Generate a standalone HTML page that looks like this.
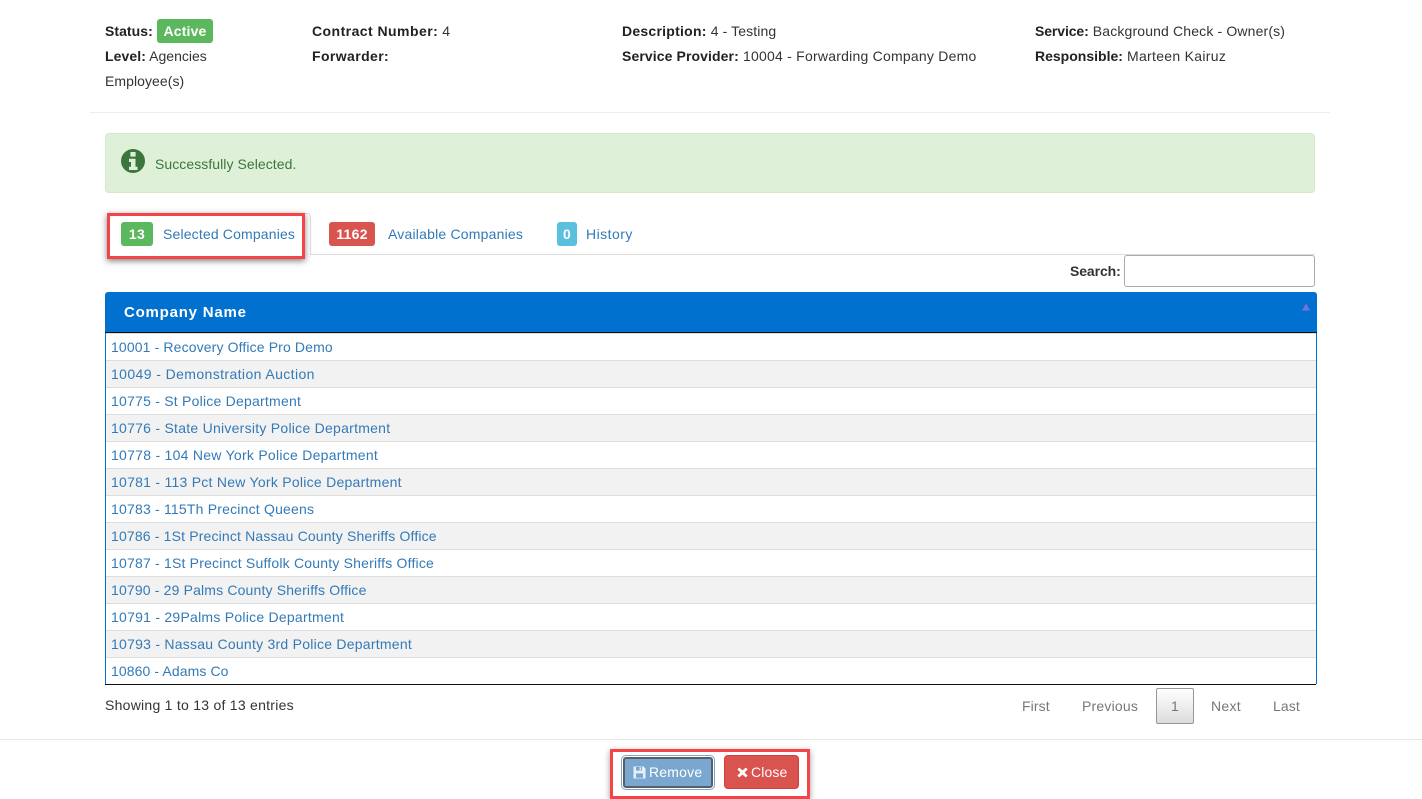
<!DOCTYPE html>
<html lang="en">
<head>
<meta charset="utf-8">
<title>Selected Companies</title>
<style>
html,body{margin:0;padding:0;background:#fff;}
body{width:1422px;height:799px;position:relative;overflow:hidden;font-family:"Liberation Sans",sans-serif;font-size:14px;color:#333;}
.t{position:absolute;white-space:nowrap;line-height:20px;height:20px;letter-spacing:.2px;}
b{font-weight:700;color:#222;}
a{color:#337ab7;text-decoration:none;}
.box{position:absolute;box-sizing:border-box;}
.badge{position:absolute;box-sizing:border-box;border-radius:3px;color:#fff;font-weight:700;text-align:center;line-height:24px;height:24px;font-size:14px;letter-spacing:.3px;}
.row{position:absolute;left:106px;width:1210px;height:27px;box-sizing:border-box;border-bottom:1px solid #ddd;}
.row a{position:absolute;left:5px;top:3px;line-height:20px;white-space:nowrap;letter-spacing:.16px;}
.even{background:#f2f2f2;}
.pg{position:absolute;top:696px;line-height:20px;color:#777;white-space:nowrap;letter-spacing:.15px;}
.btn{position:absolute;box-sizing:border-box;color:#fff;line-height:20px;border-radius:4px;}
</style>
</head>
<body>

<div class="t" style="left:105px;top:21px"><b style="letter-spacing:.05px">Status:</b></div>
<div class="badge" style="left:157px;top:19px;width:56px;background:#5cb85c;letter-spacing:.15px">Active</div>
<div class="t" style="left:105px;top:46px"><b style="letter-spacing:.1px">Level:</b> <span style="letter-spacing:0;margin-left:-1px">Agencies</span></div>
<div class="t" style="left:105px;top:71px;letter-spacing:.06px">Employee(s)</div>

<div class="t" style="left:312px;top:21px"><b style="letter-spacing:.45px">Contract Number:</b> 4</div>
<div class="t" style="left:312px;top:46px"><b style="letter-spacing:.4px">Forwarder:</b></div>

<div class="t" style="left:622px;top:21px"><b style="letter-spacing:.25px">Description:</b> <span style="letter-spacing:.1px">4 - Testing</span></div>
<div class="t" style="left:622px;top:46px"><b style="letter-spacing:.1px">Service Provider:</b> <span style="letter-spacing:.23px">10004 - Forwarding Company Demo</span></div>

<div class="t" style="left:1035px;top:21px"><b style="letter-spacing:-.1px">Service:</b> <span style="letter-spacing:.15px">Background Check - Owner(s)</span></div>
<div class="t" style="left:1035px;top:46px"><b style="letter-spacing:0">Responsible:</b> <span style="letter-spacing:.3px">Marteen Kairuz</span></div>

<div class="box" style="left:90px;top:112px;width:1240px;height:1px;background:#eee;"></div>

<div class="box" style="left:105px;top:133px;width:1210px;height:60px;background:#dff0d8;border:1px solid #d6e9c6;border-radius:4px;"></div>
<svg class="box" style="left:121px;top:149px" width="24" height="24" viewBox="0 0 24 24"><circle cx="12" cy="12" r="12" fill="#3c763d"/><rect x="9.4" y="3" width="5.2" height="4.6" fill="#dff0d8"/><path d="M8 9.8h6.5v8h2v3.2H8v-3.2h2v-4.8H8z" fill="#dff0d8"/></svg>
<div class="t" style="left:155px;top:154px;color:#3c763d;letter-spacing:.06px">Successfully Selected.</div>

<div class="box" style="left:310px;top:254px;width:1005px;height:1px;background:#ddd;"></div>
<div class="box" style="left:107px;top:213px;width:204px;height:42px;background:#fff;border:1px solid #ddd;border-bottom:0;border-radius:4px 4px 0 0;"></div>
<div class="box" style="left:107px;top:213px;width:198px;height:46px;border:3px solid #f44448;box-shadow:0 2px 6px rgba(0,0,0,.5);"></div>
<div class="badge" style="left:121px;top:222px;width:32px;background:#5cb85c;">13</div>
<a class="t" style="left:163px;top:224px;letter-spacing:.16px" href="#">Selected Companies</a>
<div class="badge" style="left:329px;top:222px;width:46px;background:#d9534f;">1162</div>
<a class="t" style="left:388px;top:224px;letter-spacing:.2px" href="#">Available Companies</a>
<div class="badge" style="left:557px;top:222px;width:20px;background:#5bc0de;">0</div>
<a class="t" style="left:586px;top:224px;letter-spacing:.47px" href="#">History</a>

<div class="t" style="left:1070px;top:261px"><b style="color:#333;letter-spacing:-.1px">Search:</b></div>
<input class="box" style="left:1124px;top:255px;width:191px;height:32px;border:1px solid #aaa;border-radius:3px;background:#fff;outline:0;" type="text" aria-label="Search">

<div class="box" style="left:105px;top:292px;width:1212px;height:41px;background:#0071ce;border-bottom:1px solid #111;border-radius:3px 3px 0 0;"></div>
<div class="t" style="left:124px;top:303px;color:#fff;font-weight:700;font-size:15px;letter-spacing:.78px;">Company Name</div>
<svg class="box" style="left:1301px;top:303px" width="10" height="8" viewBox="0 0 10 8"><path d="M5 0.5L9 7.5H1z" fill="#7a6fdc"/></svg>
<div class="box" style="left:105px;top:333px;width:1px;height:351px;background:#0071ce;"></div>
<div class="box" style="left:1316px;top:333px;width:1px;height:351px;background:#0071ce;"></div>
<div class="box" style="left:106px;top:333px;width:1210px;height:1px;background:#ddd;"></div>

<div class="row" style="top:334px"><a href="#" style="letter-spacing:.13px">10001 - Recovery Office Pro Demo</a></div>
<div class="row even" style="top:361px"><a href="#" style="letter-spacing:.4px">10049 - Demonstration Auction</a></div>
<div class="row" style="top:388px"><a href="#" style="letter-spacing:.23px">10775 - St Police Department</a></div>
<div class="row even" style="top:415px"><a href="#" style="letter-spacing:.26px">10776 - State University Police Department</a></div>
<div class="row" style="top:442px"><a href="#" style="letter-spacing:.27px">10778 - 104 New York Police Department</a></div>
<div class="row even" style="top:469px"><a href="#" style="letter-spacing:.26px">10781 - 113 Pct New York Police Department</a></div>
<div class="row" style="top:496px"><a href="#" style="letter-spacing:.2px">10783 - 115Th Precinct Queens</a></div>
<div class="row even" style="top:523px"><a href="#">10786 - 1St Precinct Nassau County Sheriffs Office</a></div>
<div class="row" style="top:550px"><a href="#" style="letter-spacing:.2px">10787 - 1St Precinct Suffolk County Sheriffs Office</a></div>
<div class="row even" style="top:577px"><a href="#">10790 - 29 Palms County Sheriffs Office</a></div>
<div class="row" style="top:604px"><a href="#" style="letter-spacing:.25px">10791 - 29Palms Police Department</a></div>
<div class="row even" style="top:631px"><a href="#" style="letter-spacing:.25px">10793 - Nassau County 3rd Police Department</a></div>
<div class="row" style="top:658px;height:26px;border-bottom:0"><a href="#" style="letter-spacing:.1px">10860 - Adams Co</a></div>
<div class="box" style="left:105px;top:684px;width:1211px;height:1px;background:#111;"></div>

<div class="t" style="left:105px;top:695px;letter-spacing:.26px">Showing 1 to 13 of 13 entries</div>
<div class="pg" style="left:1022px;letter-spacing:.1px">First</div>
<div class="pg" style="left:1082px;letter-spacing:.2px">Previous</div>
<div class="box" style="left:1156px;top:688px;width:38px;height:36px;border:1px solid #979797;border-radius:2px;background:linear-gradient(#fff,#dcdcdc);"></div>
<div class="pg" style="left:1171px">1</div>
<div class="pg" style="left:1211px;letter-spacing:.3px">Next</div>
<div class="pg" style="left:1273px;letter-spacing:.1px">Last</div>

<div class="box" style="left:0;top:739px;width:1422px;height:1px;background:#e7e7e7;"></div>

<div class="box" style="left:610px;top:749px;width:200px;height:50px;border:3px solid #f44448;box-shadow:0 2px 6px rgba(0,0,0,.4);"></div>
<div class="btn" style="left:621px;top:755px;width:94px;height:35px;border:1px solid #7aa7d0;border-radius:5px;background:#fff;"></div>
<div class="btn" style="left:623px;top:757px;width:90px;height:31px;background:#7aa7d0;border:2px solid #5a5f66;border-radius:3px;"></div>
<svg class="box" style="left:633px;top:766px" width="13" height="13" viewBox="0 0 13 13"><path d="M0.5 0.5H10.5L12.5 2.5V12.5H0.5Z" fill="#e8eff6"/><rect x="3" y="1" width="6" height="3.6" fill="#7aa7d0"/><rect x="6.6" y="1.4" width="1.4" height="2.6" fill="#e8eff6"/><rect x="3" y="7.4" width="7" height="4.4" fill="#7aa7d0"/></svg>
<div class="t" style="left:649px;top:762px;color:#fff;letter-spacing:.2px">Remove</div>

<div class="btn" style="left:724px;top:755px;width:75px;height:34px;background:#d9534f;border:1px solid #d43f3a;"></div>
<svg class="box" style="left:737px;top:767px" width="11" height="11" viewBox="0 0 11 11"><path d="M2.2 0.6L5.5 3.4L8.8 0.6L10.6 2.4L7.6 5.5L10.6 8.6L8.8 10.4L5.5 7.6L2.2 10.4L0.4 8.6L3.4 5.5L0.4 2.4Z" fill="#fff"/></svg>
<div class="t" style="left:751px;top:762px;color:#fff;letter-spacing:.13px">Close</div>

</body>
</html>
